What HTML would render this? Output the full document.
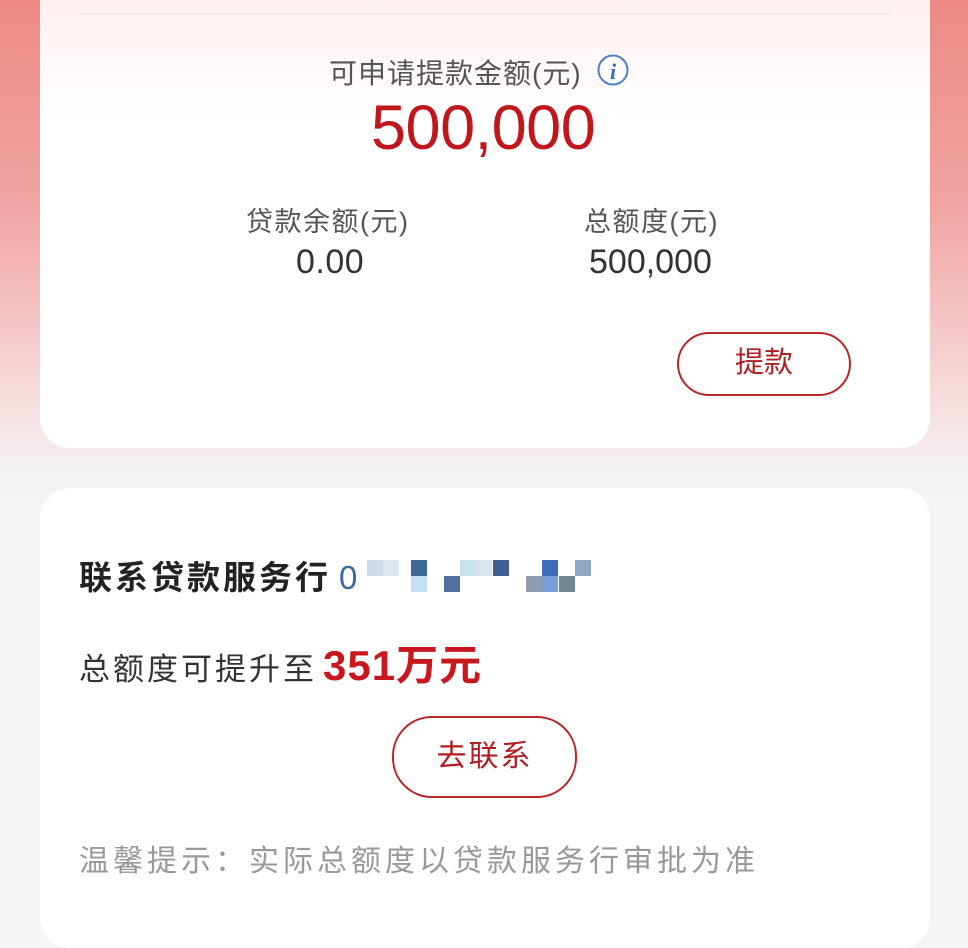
<!DOCTYPE html>
<html style="background:#f3f5f6"><head><meta charset="utf-8"><style>
*{margin:0;padding:0;box-sizing:border-box}
body{width:968px;height:913px;overflow:hidden;position:relative;font-family:"Liberation Sans","Noto Sans CJK SC",sans-serif;background:linear-gradient(#ec8a85 0px,#f0a3a0 200px,#f6dcdc 400px,#f4f1f2 470px,#f3f5f6 520px)}
.c1{position:absolute;left:40px;top:-40px;width:890px;height:488px;border-radius:30px;background:linear-gradient(#fdf0ef 40px,#fff 160px)}
.line{position:absolute;left:80px;top:13px;width:810px;height:1px;background:#f0e0df}
.c2{position:absolute;left:40px;top:488px;width:890px;height:460px;border-radius:30px;background:#fff}
.t{position:absolute;white-space:nowrap}
.btn{position:absolute;border:2px solid #b8262a;border-radius:40px;color:#b01d22;text-align:center}
.px{position:absolute;width:16px;height:16px}
</style></head><body>
<div class="c1"></div>
<div class="line"></div>
<div class="t" style="left:329px;top:52px;font-size:28px;letter-spacing:1px;color:#555">可申请提款金额(元)</div>
<svg class="t" style="left:597px;top:54px" width="32" height="32" viewBox="0 0 32 32"><circle cx="16" cy="16" r="14.5" fill="#fff" stroke="#4f7fc4" stroke-width="2"/><text x="16" y="25" font-size="22" font-style="italic" font-weight="bold" text-anchor="middle" fill="#3a66b4" font-family="Liberation Serif,serif">i</text></svg>
<div class="t" style="left:371px;top:92px;font-size:63px;color:#c0161c;letter-spacing:-0.5px">500,000</div>
<div class="t" style="left:246px;top:200px;font-size:27px;letter-spacing:1.5px;color:#555">贷款余额(元)</div>
<div class="t" style="left:296px;top:243px;font-size:34px;letter-spacing:0.5px;color:#333">0.00</div>
<div class="t" style="left:584px;top:200px;font-size:27px;letter-spacing:1.5px;color:#555">总额度(元)</div>
<div class="t" style="left:589px;top:243px;font-size:34px;letter-spacing:0px;color:#333">500,000</div>
<div class="btn" style="left:677px;top:332px;width:174px;height:64px;line-height:58px;font-size:29px">提款</div>
<div class="c2"></div>
<div class="t" style="left:79px;top:551px;font-size:33px;letter-spacing:3px;font-weight:bold;color:#222">联系贷款服务行<span style="font-weight:normal;color:#3b6a9c;letter-spacing:0;margin-left:8px">0</span></div>
<div class="px" style="left:367px;top:560px;background:#cdd8e8"></div>
<div class="px" style="left:383px;top:560px;background:#dde6ef"></div>
<div class="px" style="left:411px;top:560px;background:#3e6897"></div>
<div class="px" style="left:460px;top:560px;background:#c8e2f0"></div>
<div class="px" style="left:476px;top:560px;background:#d8e5ee"></div>
<div class="px" style="left:493px;top:560px;background:#3f5e91"></div>
<div class="px" style="left:542px;top:560px;background:#3e6cbd"></div>
<div class="px" style="left:575px;top:560px;background:#8ea8c3"></div>
<div class="px" style="left:411px;top:576px;background:#c5e0f3"></div>
<div class="px" style="left:444px;top:576px;background:#506e9e"></div>
<div class="px" style="left:526px;top:576px;background:#8e9daf"></div>
<div class="px" style="left:542px;top:576px;background:#7a9fd8"></div>
<div class="px" style="left:559px;top:576px;background:#718796"></div>
<div class="t" style="left:79px;top:632px;font-size:31px;letter-spacing:3px;color:#333">总额度可提升至<span style="font-size:42px;font-weight:bold;color:#c8181e;letter-spacing:1px;margin-left:6px">351万元</span></div>
<div class="btn" style="left:392px;top:716px;width:185px;height:82px;line-height:78px;font-size:30px;letter-spacing:2px">去联系</div>
<div class="t" style="left:79px;top:836px;font-size:30px;letter-spacing:4px;color:#999">温馨提示：实际总额度以贷款服务行审批为准</div>
</body></html>
